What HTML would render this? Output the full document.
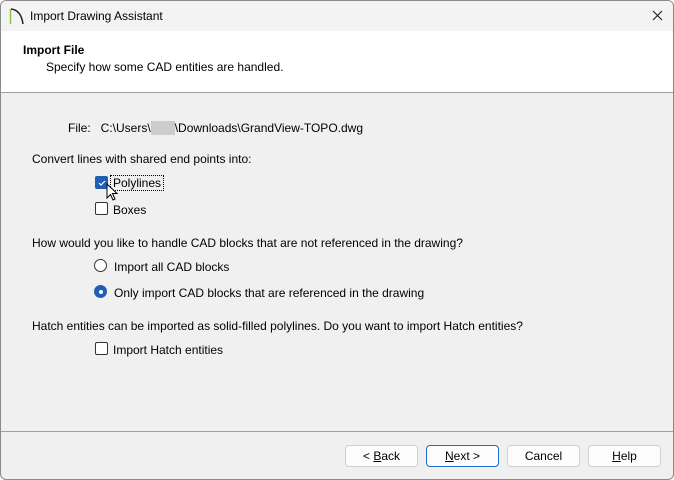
<!DOCTYPE html><html><head><style>
body{margin:0;width:674px;height:480px;overflow:hidden;background:#fff;font-family:"Liberation Sans",sans-serif;font-size:12px;color:#000}
.win{position:absolute;left:0;top:0;width:672px;height:478px;border:1px solid #8a8a8a;border-radius:6px;background:#f0f0f0;overflow:hidden}
.in{position:absolute;left:-1px;top:-1px;width:674px;height:480px}
.title{position:absolute;left:0;top:0;width:674px;height:31px;background:#f3f3f3}
.hdr{position:absolute;left:0;top:31px;width:674px;height:61px;background:#fff;border-bottom:1px solid #a0a0a0}
.t{position:absolute;white-space:nowrap}
.cb{position:absolute;width:11px;height:11px;border:1px solid #333;border-radius:2px;background:#fff}
.rb{position:absolute;width:11px;height:11px;border:1px solid #333;border-radius:50%;background:#fff}
.btn{position:absolute;top:445px;width:71px;height:20px;border:1px solid #d0d0d0;border-radius:4px;background:#fdfdfd;text-align:center;line-height:20px}
.sep{position:absolute;left:0;top:431px;width:674px;height:1px;background:#a0a0a0}
</style></head><body><div class="win"><div class="in">
<div class="title">
<svg style="position:absolute;left:9px;top:7px" width="16" height="18"><path d="M1.5 17V2" stroke="#8bc34a" stroke-width="1.5"/><path d="M2 2 Q12 3 14 17" stroke="#222" stroke-width="1.5" fill="none"/></svg>
<div class="t" style="left:30px;top:9px">Import Drawing Assistant</div>
<svg style="position:absolute;left:652px;top:10px" width="11" height="11"><path d="M1 1L10 10M10 1L1 10" stroke="#222" stroke-width="1.2"/></svg>
</div>
<div class="hdr">
<div class="t" style="left:23px;top:12px;font-weight:bold">Import File</div>
<div class="t" style="left:46px;top:29px">Specify how some CAD entities are handled.</div>
</div>
<div class="t" style="left:68px;top:121px">File:&nbsp;&nbsp; C:\Users\<span style="background:#ccc;color:#ccc">xxxx</span>\Downloads\GrandView-TOPO.dwg</div>
<div class="t" style="left:32px;top:152px">Convert lines with shared end points into:</div>
<div class="cb" style="left:95px;top:176px;background:#1e5fb3;border-color:#1e5fb3"></div>
<svg style="position:absolute;left:97px;top:178px" width="10" height="10"><path d="M2 5L4 7L8 3" stroke="#fff" stroke-width="1.2" fill="none"/></svg>
<div class="t" style="left:110px;top:175px;border:1px dotted #000;padding:0 2px">Polylines</div>
<svg style="position:absolute;left:106px;top:183px" width="14" height="20"><path d="M1 1V15L4.5 11.5L7 17L9 16L6.5 10.5H11Z" fill="#fff" stroke="#000"/></svg>
<div class="cb" style="left:95px;top:202px"></div>
<div class="t" style="left:113px;top:203px">Boxes</div>
<div class="t" style="left:32px;top:236px">How would you like to handle CAD blocks that are not referenced in the drawing?</div>
<div class="rb" style="left:94px;top:259px"></div>
<div class="t" style="left:114px;top:260px">Import all CAD blocks</div>
<div class="rb" style="left:94px;top:285px;background:#1e5fb3;border-color:#1e5fb3"></div>
<div style="position:absolute;left:99px;top:290px;width:4px;height:4px;border-radius:50%;background:#fff"></div>
<div class="t" style="left:114px;top:286px">Only import CAD blocks that are referenced in the drawing</div>
<div class="t" style="left:32px;top:319px">Hatch entities can be imported as solid-filled polylines. Do you want to import Hatch entities?</div>
<div class="cb" style="left:95px;top:342px"></div>
<div class="t" style="left:113px;top:343px">Import Hatch entities</div>
<div class="sep"></div>
<div class="btn" style="left:345px">&lt; <u>B</u>ack</div>
<div class="btn" style="left:426px;border-color:#1e6ec8"><u>N</u>ext &gt;</div>
<div class="btn" style="left:507px">Cancel</div>
<div class="btn" style="left:588px"><u>H</u>elp</div>
</div></div></body></html>
